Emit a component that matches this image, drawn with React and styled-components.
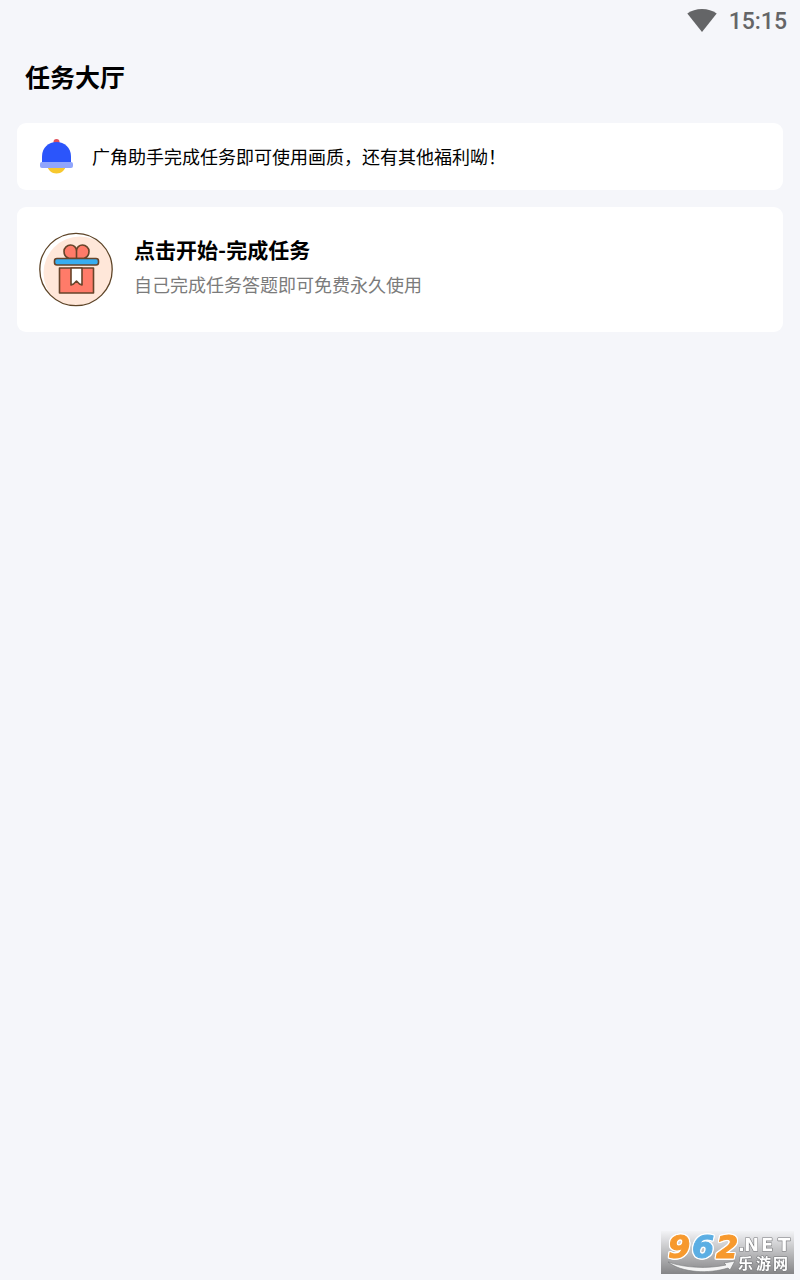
import React from 'react';
import styled, { createGlobalStyle } from 'styled-components';

const GlobalStyle = createGlobalStyle`
    * {
        box-sizing: border-box;
    }
    body {
        margin: 0;
        background-color: #f5f6fa;
        color: #000;
        font-family: Roboto, "Noto Sans CJK SC", sans-serif;
    }
`

const Page = styled.div`
    min-height: 100vh;
`

const StatusBar = styled.div`
    height: 42px;
    padding: 0 13px;
    display: flex;
    align-items: center;
    justify-content: flex-end;
    gap: 12px;
    color: #646567;
`

const Clock = styled.time`
    font-size: 23px;
    font-weight: 500;
    line-height: 26px;
    padding-top: 2px;
`

const Header = styled.header`
    padding: 19px 25px 26px;
`

const PageTitle = styled.h1`
    margin: 0;
    font-size: 25px;
    font-weight: 700;
    line-height: 36px;
`

const Content = styled.main`
    padding: 0 17px;
    display: flex;
    flex-direction: column;
    gap: 17px;
`

const Notice = styled.section`
    padding: 16px 22px 14px;
    display: flex;
    align-items: center;
    gap: 18px;
    border-radius: 9px;
    background-color: #fff;
`

const NoticeText = styled.p`
    margin: 0;
    font-size: 18px;
    line-height: 26px;
`

const TaskCard = styled.button`
    width: 100%;
    padding: 25px 22px;
    display: flex;
    align-items: flex-start;
    gap: 21px;
    border: none;
    border-radius: 9px;
    background-color: #fff;
    color: inherit;
    font-family: inherit;
    text-align: left;
    cursor: pointer;
`

const TaskText = styled.span`
    display: flex;
    flex-direction: column;
`

const TaskTitle = styled.span`
    font-size: 21px;
    font-weight: 700;
    line-height: 38px;
`

const TaskDescription = styled.span`
    color: #7b7b7b;
    font-size: 18px;
    line-height: 32px;
`

const Watermark = styled.div`
    position: fixed;
    right: 6px;
    bottom: 6px;
    display: flex;

    svg {
        overflow: visible;
    }
`

const LogoDigits = styled.g`
    font-family: "DejaVu Sans", sans-serif;
    font-size: 32px;
    font-weight: 700;
    font-style: italic;
    filter: drop-shadow(1px 0 0 #fff) drop-shadow(-1px 0 0 #fff) drop-shadow(0 1px 0 #fff) drop-shadow(0 -1px 0 #fff);
`

const LogoDigit = styled.text`
    fill: ${props => props.$color};
    stroke: ${props => props.$color};
    stroke-width: 1px;
`

const WifiIcon = () => (
    <svg width="30" height="24" viewBox="0 0 30 24" aria-hidden="true">
        <path d="M15 23 0.300 4.600C4.300 1.600 9.400 0 15 0s10.700 1.600 14.700 4.600z" fill="currentColor" />
    </svg>
)

const BellIcon = () => (
    <svg width="35" height="37" viewBox="0 0 35 37" aria-hidden="true">
        <circle cx="17.500" cy="3" r="3" fill="#e0525c" />
        <path d="M8 26h19c-1 5.500-4.500 8.500-9.500 8.500S9 31.500 8 26z" fill="#f7c82e" />
        <path d="M3 25V17.500C3 8.500 9.500 3 17.500 3S32 8.500 32 17.500V25z" fill="#2b55fb" />
        <rect x="1" y="23" width="33" height="6" rx="2" fill="#90a5fc" />
    </svg>
)

const GiftIcon = () => (
    <svg width="74" height="75" viewBox="0 0 74 75" aria-hidden="true">
        <defs>
            <clipPath id="gift-disc">
                <circle cx="37" cy="37.500" r="36" />
            </clipPath>
        </defs>
        <circle cx="41" cy="41" r="36.500" fill="#ffe7d9" clipPath="url(#gift-disc)" />
        <circle cx="37" cy="37.500" r="36.200" fill="none" stroke="#5e4427" strokeWidth="1.300" />
        <g stroke="#67442a" strokeWidth="1.600" strokeLinejoin="round">
            <path
                d="M37.500 26.500V19c0-3.500-2.700-6-6-6s-6.500 2.700-6.500 6.200c0 3.400 2 6.300 5 7.300zM37.500 26.500V19c0-3.500 2.700-6 6-6s6.500 2.700 6.500 6.200c0 3.400-2 6.300-5 7.300z"
                fill="#ff7b69"
            />
            <rect x="15.500" y="26.500" width="44" height="6.500" rx="2.500" fill="#37adf0" />
            <path d="M20.500 36h34v25h-34z" fill="#ff7b69" />
            <path d="M32 36h11v17l-2.500-1-3-3-3 3-2.500 1z" fill="#fff" />
        </g>
    </svg>
)

const SiteLogo = () => (
    <svg width="133" height="43" viewBox="0 0 133 43" role="img" aria-label="962.NET 乐游网">
        <defs>
            <linearGradient id="logo-back" x1="0" y1="0" x2="0" y2="1">
                <stop offset="0" stopColor="#f2f3f6" />
                <stop offset="0.500" stopColor="#bcbcbe" />
                <stop offset="1" stopColor="#858587" />
            </linearGradient>
        </defs>
        <path d="M0 0h133v43H0z" fill="url(#logo-back)" />
        <path
            d="M7 31c17 6 40 7 58 3l-2-2 11-2-5 9-2-2c-19 6-46 5-60-6z"
            fill="#f4f4f4"
            stroke="#77787b"
            strokeWidth="0.600"
        />
        <LogoDigits>
            <LogoDigit x="7" y="27" $color="#f7992d">9</LogoDigit>
            <LogoDigit x="31" y="27" $color="#5caee3">6</LogoDigit>
            <LogoDigit x="55" y="27" $color="#f7992d">2</LogoDigit>
        </LogoDigits>
        <g fill="#fff" stroke="#77787b" strokeWidth="1.200" paintOrder="stroke" strokeLinejoin="round">
            <text
                x="77 83 100 117"
                y="20"
                fontFamily='"DejaVu Sans", sans-serif'
                fontWeight="700"
                fontSize="18"
            >
                .NET
            </text>
            <text
                x="77 95 112"
                y="38"
                fontFamily='"Noto Sans CJK SC", sans-serif'
                fontWeight="700"
                fontSize="15"
            >
                乐游网
            </text>
        </g>
    </svg>
)

const App = () => {

    return (
        <Page>
            <GlobalStyle />
            <StatusBar>
                <WifiIcon />
                <Clock>15:15</Clock>
            </StatusBar>
            <Header>
                <PageTitle>任务大厅</PageTitle>
            </Header>
            <Content>
                <Notice>
                    <BellIcon />
                    <NoticeText>广角助手完成任务即可使用画质，还有其他福利呦！</NoticeText>
                </Notice>
                <TaskCard type="button">
                    <GiftIcon />
                    <TaskText>
                        <TaskTitle>点击开始-完成任务</TaskTitle>
                        <TaskDescription>自己完成任务答题即可免费永久使用</TaskDescription>
                    </TaskText>
                </TaskCard>
            </Content>
            <Watermark>
                <SiteLogo />
            </Watermark>
        </Page>
    )

}

export default App;
